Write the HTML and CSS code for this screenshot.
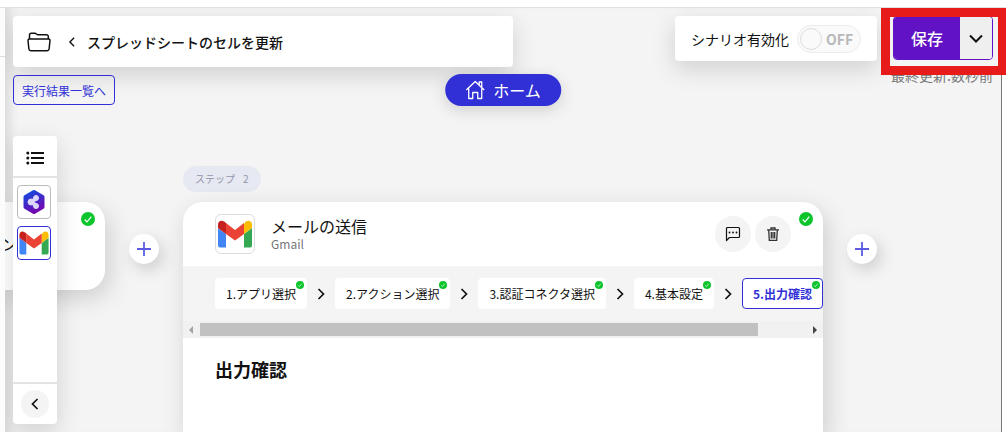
FILE: index.html
```html
<!DOCTYPE html>
<html lang="ja">
<head>
<meta charset="UTF-8">
<meta name="viewport" content="width=device-width, initial-scale=1.0">
<title>スプレッドシートのセルを更新</title>
<link rel="stylesheet" href="styles.css">
</head>
<body>

<!-- 共通アイコン -->
<svg class="symbols" aria-hidden="true">
  <symbol id="gmail" viewBox="0 0 36 28">
    <path fill="#4285f4" d="M1 8v17.500a2 2 0 0 0 2 2h6V14z"/>
    <path fill="#34a853" d="M27 14v13.500h6a2 2 0 0 0 2-2V8z"/>
    <path fill="#fbbc04" d="M27 4v10l8-6V4.500C35 1 31.500-.5 28.500 1.800z"/>
    <path fill="#ea4335" d="M9 14V3l9 7 9-7v11l-9 6.500z"/>
    <path fill="#c5221f" d="M1 4.500V8l8 6V3L7.500 1.800C4.500-.5 1 1 1 4.500z"/>
  </symbol>
  <symbol id="check" viewBox="0 0 16 16">
    <circle cx="8" cy="8" r="8" fill="#0cc42b"/>
    <path d="M4.200 8.600l2.600 2.600 5-6" fill="none" stroke="#fff" stroke-width="1.300"/>
  </symbol>
  <symbol id="next" viewBox="0 0 8 12">
    <path d="M1.500 1l5 5-5 5" fill="none" stroke="#111" stroke-width="1.700"/>
  </symbol>
  <symbol id="prev" viewBox="0 0 8 12">
    <path d="M6.500 1l-5 5 5 5" fill="none" stroke="#111" stroke-width="1.700"/>
  </symbol>
  <symbol id="plus" viewBox="0 0 16 16">
    <path d="M8 1v14M1 8h14" fill="none" stroke="#5c5ce0" stroke-width="1.800"/>
  </symbol>
</svg>

<div class="topbar"></div>
<div class="main">
  <aside class="side"><div class="side-head"></div></aside>

  <div class="canvas">
    <header class="header">
      <div class="header-left">
        <div class="title-card">
          <svg class="folder" viewBox="0 0 24 20" fill="none" stroke="#111" stroke-width="1.500" stroke-linejoin="round">
            <path d="M2.500 7V3a1.800 1.800 0 0 1 1.800-1.800h3.500c1.500 0 1.800 1.600 3.200 1.600h8.500A1.800 1.800 0 0 1 21.300 4.600V7"/>
            <path d="M2.300 7h19.400a1.300 1.300 0 0 1 1.300 1.500l-.9 8.500a2 2 0 0 1-2 1.800H3.900a2 2 0 0 1-2-1.800L1 8.500A1.300 1.300 0 0 1 2.300 7z"/>
          </svg>
          <button class="back" aria-label="戻る"><svg viewBox="0 0 8 12"><use href="#prev"/></svg></button>
          <span class="title">スプレッドシートのセルを更新</span>
        </div>
        <a class="results" href="#">実行結果一覧へ</a>
      </div>
      <div class="header-right">
        <label class="toggle-card">
          <span>シナリオ有効化</span>
          <input type="checkbox" class="toggle-input">
          <span class="toggle"><span class="knob"></span>OFF</span>
        </label>
        <div class="save-area">
          <div class="save-group">
            <button class="save">保存</button>
            <button class="save-menu" aria-label="保存メニュー">
              <svg viewBox="0 0 14 9"><path d="M1 1.500L7 7.500l6-6" fill="none" stroke="#111" stroke-width="2"/></svg>
            </button>
          </div>
          <div class="updated">最終更新:数秒前</div>
        </div>
      </div>
    </header>

    <button class="home">
      <svg viewBox="0 0 20 20" fill="none" stroke="#fff" stroke-width="1.300" stroke-linejoin="round">
        <path d="M1 10l9-8.500 9 8.500M3.500 8.500v10h4v-6h5v6h4v-10M14 5V2h2.500v5.200"/>
      </svg>
      ホーム
    </button>

    <nav class="rail">
      <button class="rail-list" aria-label="一覧">
        <svg viewBox="0 0 18 14" fill="none" stroke="#111" stroke-width="1.800">
          <path d="M5 2h13M5 7h13M5 12h13"/>
          <path d="M1.800 2h.01M1.800 7h.01M1.800 12h.01" stroke-width="3" stroke-linecap="round"/>
        </svg>
      </button>
      <div class="rail-items">
        <button class="rail-item" aria-label="トリガー">
          <svg viewBox="0 0 24 26">
            <defs><linearGradient id="hex" x1=".2" y1="0" x2=".6" y2="1">
              <stop offset="0" stop-color="#1747dc"/><stop offset="1" stop-color="#7208b0"/>
            </linearGradient></defs>
            <path d="M12 3l8.500 5v10L12 23l-8.500-5V8z" fill="url(#hex)" stroke="url(#hex)" stroke-width="4" stroke-linejoin="round"/>
            <g fill="#dcd6fb" stroke="#dcd6fb"><path d="M14 9.500L9.500 13l4.500 3.500" fill="none" stroke-width="4"/>
            <circle cx="14" cy="9" r="2.500"/><circle cx="9" cy="13" r="3"/><circle cx="14" cy="17" r="2.500"/></g>
          </svg>
        </button>
        <button class="rail-item active" aria-label="Gmail"><svg viewBox="0 0 36 28"><use href="#gmail"/></svg></button>
      </div>
      <div class="rail-foot">
        <button class="round rail-close" aria-label="閉じる"><svg viewBox="0 0 8 12"><use href="#prev"/></svg></button>
      </div>
    </nav>

    <main class="flow">
      <div class="node trigger">
        <span class="trigger-name">ン</span>
        <svg class="done" viewBox="0 0 16 16"><use href="#check"/></svg>
      </div>
      <button class="add" aria-label="追加"><svg viewBox="0 0 16 16"><use href="#plus"/></svg></button>

      <section class="step">
        <div class="step-tag"><span>ステップ</span><span>2</span></div>
        <div class="node step-card">
          <div class="step-head">
            <div class="app-icon"><svg viewBox="0 0 36 28"><use href="#gmail"/></svg></div>
            <div class="step-name">
              <h2>メールの送信</h2>
              <p>Gmail</p>
            </div>
            <button class="round" aria-label="コメント">
              <svg class="comment" viewBox="0 0 16 16" fill="none" stroke="#111" stroke-width="1.200" stroke-linejoin="round">
                <path d="M1.500 14.500v-12a1 1 0 0 1 1-1h11a1 1 0 0 1 1 1v8a1 1 0 0 1-1 1H4.500z"/>
                <path d="M4.500 6.500h.01M8 6.500h.01M11.500 6.500h.01" stroke-width="1.800" stroke-linecap="round"/>
              </svg>
            </button>
            <button class="round" aria-label="削除">
              <svg class="trash" viewBox="0 0 12 14" fill="none" stroke="#333" stroke-width="1.300">
                <path d="M0 2.800h12M4 2.500V1h4v1.500M1.700 3l.6 10.300h7.400L10.300 3M4.300 5v6.500M6 5v6.500M7.700 5v6.500"/>
              </svg>
            </button>
            <svg class="done" viewBox="0 0 16 16"><use href="#check"/></svg>
          </div>

          <div class="tabs">
            <button class="tab">1.アプリ選択<svg viewBox="0 0 16 16"><use href="#check"/></svg></button>
            <svg class="sep" viewBox="0 0 8 12"><use href="#next"/></svg>
            <button class="tab">2.アクション選択<svg viewBox="0 0 16 16"><use href="#check"/></svg></button>
            <svg class="sep" viewBox="0 0 8 12"><use href="#next"/></svg>
            <button class="tab">3.認証コネクタ選択<svg viewBox="0 0 16 16"><use href="#check"/></svg></button>
            <svg class="sep" viewBox="0 0 8 12"><use href="#next"/></svg>
            <button class="tab">4.基本設定<svg viewBox="0 0 16 16"><use href="#check"/></svg></button>
            <svg class="sep" viewBox="0 0 8 12"><use href="#next"/></svg>
            <button class="tab active">5.出力確認<svg viewBox="0 0 16 16"><use href="#check"/></svg></button>
          </div>
          <div class="scrollbar">
            <svg viewBox="0 0 4 8"><path d="M4 0v8L0 4z" fill="#a3a3a3"/></svg>
            <div class="track"><div class="thumb"></div></div>
            <svg viewBox="0 0 4 8"><path d="M0 0v8l4-4z" fill="#444"/></svg>
          </div>

          <h3 class="section-title">出力確認</h3>
        </div>
      </section>

      <button class="add" aria-label="追加"><svg viewBox="0 0 16 16"><use href="#plus"/></svg></button>
    </main>
  </div>

  <div class="edge"></div>
  <div class="highlight"></div>
</div>

</body>
</html>
```

FILE: styles.css
```css
* { box-sizing: border-box; }
body { margin: 0; min-height: 100vh; display: flex; flex-direction: column; background: #fff; color: #111; font-family: "Noto Sans CJK JP", sans-serif; font-size: 14px; }
button { margin: 0; padding: 0; border: 0; background: none; color: inherit; font: inherit; cursor: pointer; }
h2, h3, p { margin: 0; }
svg { display: block; flex: none; }
.symbols { position: absolute; width: 0; height: 0; }

.topbar { height: 8px; border-bottom: 1px solid #e0e0e0; }
.main { position: relative; flex: 1; display: flex; overflow: hidden; }
.side { width: 5px; background: #fcfcfc; }
.side-head { height: 49px; border-bottom: 1px solid #ddd; }
.edge { width: 5px; border-left: 1px solid #777; }
.canvas { position: relative; flex: 1; min-width: 0; display: flex; flex-direction: column; padding-top: 8px; background: #f4f4f4; overflow: hidden; box-shadow: inset 12px 0 12px -8px rgba(0, 0, 0, .12); }

/* ヘッダー */
.header { display: flex; justify-content: space-between; padding: 0 8px; height: 150px; }
.header-left { width: 500px; }
.title-card { display: flex; align-items: center; height: 51px; padding: 0 14px; background: #fff; border-radius: 4px; box-shadow: 0 8px 24px rgba(0, 0, 0, .15); }
.folder { width: 24px; height: 20px; }
.back { margin: 0 11px 0 17px; }
.back svg { width: 8px; height: 10px; }
.title { font-size: 14px; font-weight: 500; }
.results { display: inline-flex; align-items: center; height: 30px; margin-top: 8px; padding: 0 8px; border: 1px solid #3030d6; border-radius: 4px; color: #3030d6; font-size: 12px; text-decoration: none; }
.header-right { display: flex; align-items: flex-start; gap: 16px; }
.toggle-card { display: flex; align-items: center; gap: 8px; height: 45px; padding: 0 16px; background: #fff; border-radius: 4px; box-shadow: 0 8px 24px rgba(0, 0, 0, .15); }
.toggle-input { position: absolute; opacity: 0; }
.toggle { display: flex; align-items: center; gap: 4px; width: 64px; height: 28px; padding: 0 2px; border: 1px solid #ececec; border-radius: 14px; background: #fafafa; color: #b8b8b8; font-weight: 700; }
.knob { width: 22px; height: 22px; border: 1px solid #ddd; border-radius: 50%; }
.save-area { width: 100px; }
.save-group { display: flex; height: 44px; border: 1px solid #6112c4; border-radius: 4px; overflow: hidden; }
.save { flex: 1; background: #6112c4; color: #fff; font-size: 16px; font-weight: 500; }
.save-menu { display: flex; align-items: center; justify-content: center; width: 32px; background: #efefef; }
.save-menu svg { width: 14px; height: 9px; }
.updated { display: flex; justify-content: flex-end; margin-top: 5px; color: #777; font-size: 14px; line-height: 20px; white-space: nowrap; }
.highlight { position: absolute; top: 0; right: -1px; width: 126px; height: 67px; border: 9px solid #e81b1b; pointer-events: none; }

.home { position: absolute; top: 66px; left: 50%; transform: translateX(-50%); display: flex; align-items: center; gap: 8px; height: 32px; padding: 0 20px; border-radius: 16px; background: #3030d6; color: #fff; font-size: 16px; white-space: nowrap; box-shadow: 0 4px 16px rgba(0, 0, 0, .15); }
.home svg { width: 20px; height: 20px; }

/* 左のミニナビ */
.rail { position: absolute; z-index: 1; top: 128px; bottom: 8px; left: 8px; width: 44px; display: flex; flex-direction: column; background: #fff; border-radius: 4px; box-shadow: 0 8px 24px rgba(0, 0, 0, .15); }
.rail-list { display: flex; align-items: center; justify-content: center; height: 42px; padding-top: 3px; border-bottom: 2px solid #e3e3e3; }
.rail-list svg { width: 18px; height: 14px; }
.rail-items { flex: 1; display: flex; flex-direction: column; gap: 7px; padding: 7px 4px; }
.rail-item { display: flex; align-items: center; justify-content: center; width: 34px; height: 34px; border: 1px solid #bbb; border-radius: 4px; }
.rail-item.active { border-color: #3030d6; }
.rail-item svg { width: 24px; height: 26px; }
.rail-item.active svg { width: 32px; height: 24px; }
.rail-foot { display: flex; align-items: center; justify-content: center; height: 42px; border-top: 2px solid #e3e3e3; }

/* フロー */
.flow { flex: 1; display: flex; gap: 24px; }
.node { position: relative; background: #fff; border-radius: 20px; box-shadow: 4px 8px 24px rgba(0, 0, 0, .16); }
.trigger { flex: none; width: 100px; height: 88px; margin-top: 36px; border-radius: 0 20px 20px 0; }
.trigger-name { position: absolute; left: -4px; top: 30px; font-size: 16px; line-height: 24px; white-space: nowrap; }
.done { position: absolute; top: 10px; right: 10px; width: 14px; height: 14px; }
.add { flex: none; display: flex; align-items: center; justify-content: center; width: 30px; height: 30px; margin-top: 68px; border-radius: 50%; background: #fff; box-shadow: 4px 6px 16px rgba(0, 0, 0, .16); }
.add svg { width: 16px; height: 16px; }
.step { flex: none; display: flex; flex-direction: column; align-items: flex-start; width: 640px; }
.step-tag { display: flex; gap: 8px; height: 26px; margin-bottom: 10px; padding: 0 12px; border-radius: 13px; background: #e6e9f2; color: #9494ac; font-size: 10px; line-height: 26px; }
.step-card { flex: 1; width: 100%; min-height: 230px; border-radius: 20px 20px 0 0; }
.step-head { display: flex; align-items: center; gap: 4px; height: 64px; padding: 0 32px; }
.app-icon { display: flex; align-items: center; justify-content: center; width: 40px; height: 40px; border: 1px solid #ddd; border-radius: 6px; }
.app-icon svg { width: 36px; height: 28px; }
.step-name { flex: 1; margin-left: 12px; }
.step-name h2 { font-size: 16px; font-weight: 400; line-height: 20px; }
.step-name p { color: #777; font-size: 12px; line-height: 16px; }
.round { display: flex; align-items: center; justify-content: center; width: 36px; height: 36px; border-radius: 50%; background: #f4f4f4; }
.rail-close { width: 28px; height: 28px; }
.rail-close svg { width: 8px; height: 12px; }
.comment { width: 16px; height: 16px; }
.trash { width: 12px; height: 14px; }
.tabs { display: flex; align-items: center; justify-content: space-between; height: 55px; padding-left: 32px; background: #f4f4f4; }
.tab { position: relative; height: 31px; padding: 0 11px; border-radius: 4px; background: #fff; font-size: 12px; white-space: nowrap; }
.tab svg { position: absolute; top: 3px; right: 3px; width: 8px; height: 8px; }
.tab.active { padding: 0 10px; border: 1px solid #3030d6; color: #3030d6; font-weight: 700; }
.tab.active svg { top: 2px; right: 2px; }
.sep { width: 8px; height: 12px; }
.scrollbar { display: flex; align-items: center; gap: 7px; height: 17px; padding: 0 6px; background: #f1f1f1; }
.scrollbar svg { width: 4px; height: 8px; }
.track { flex: 1; }
.thumb { width: 92%; height: 13px; background: #c1c1c1; }
.section-title { padding: 19px 32px; font-size: 18px; font-weight: 700; line-height: 24px; }
```
